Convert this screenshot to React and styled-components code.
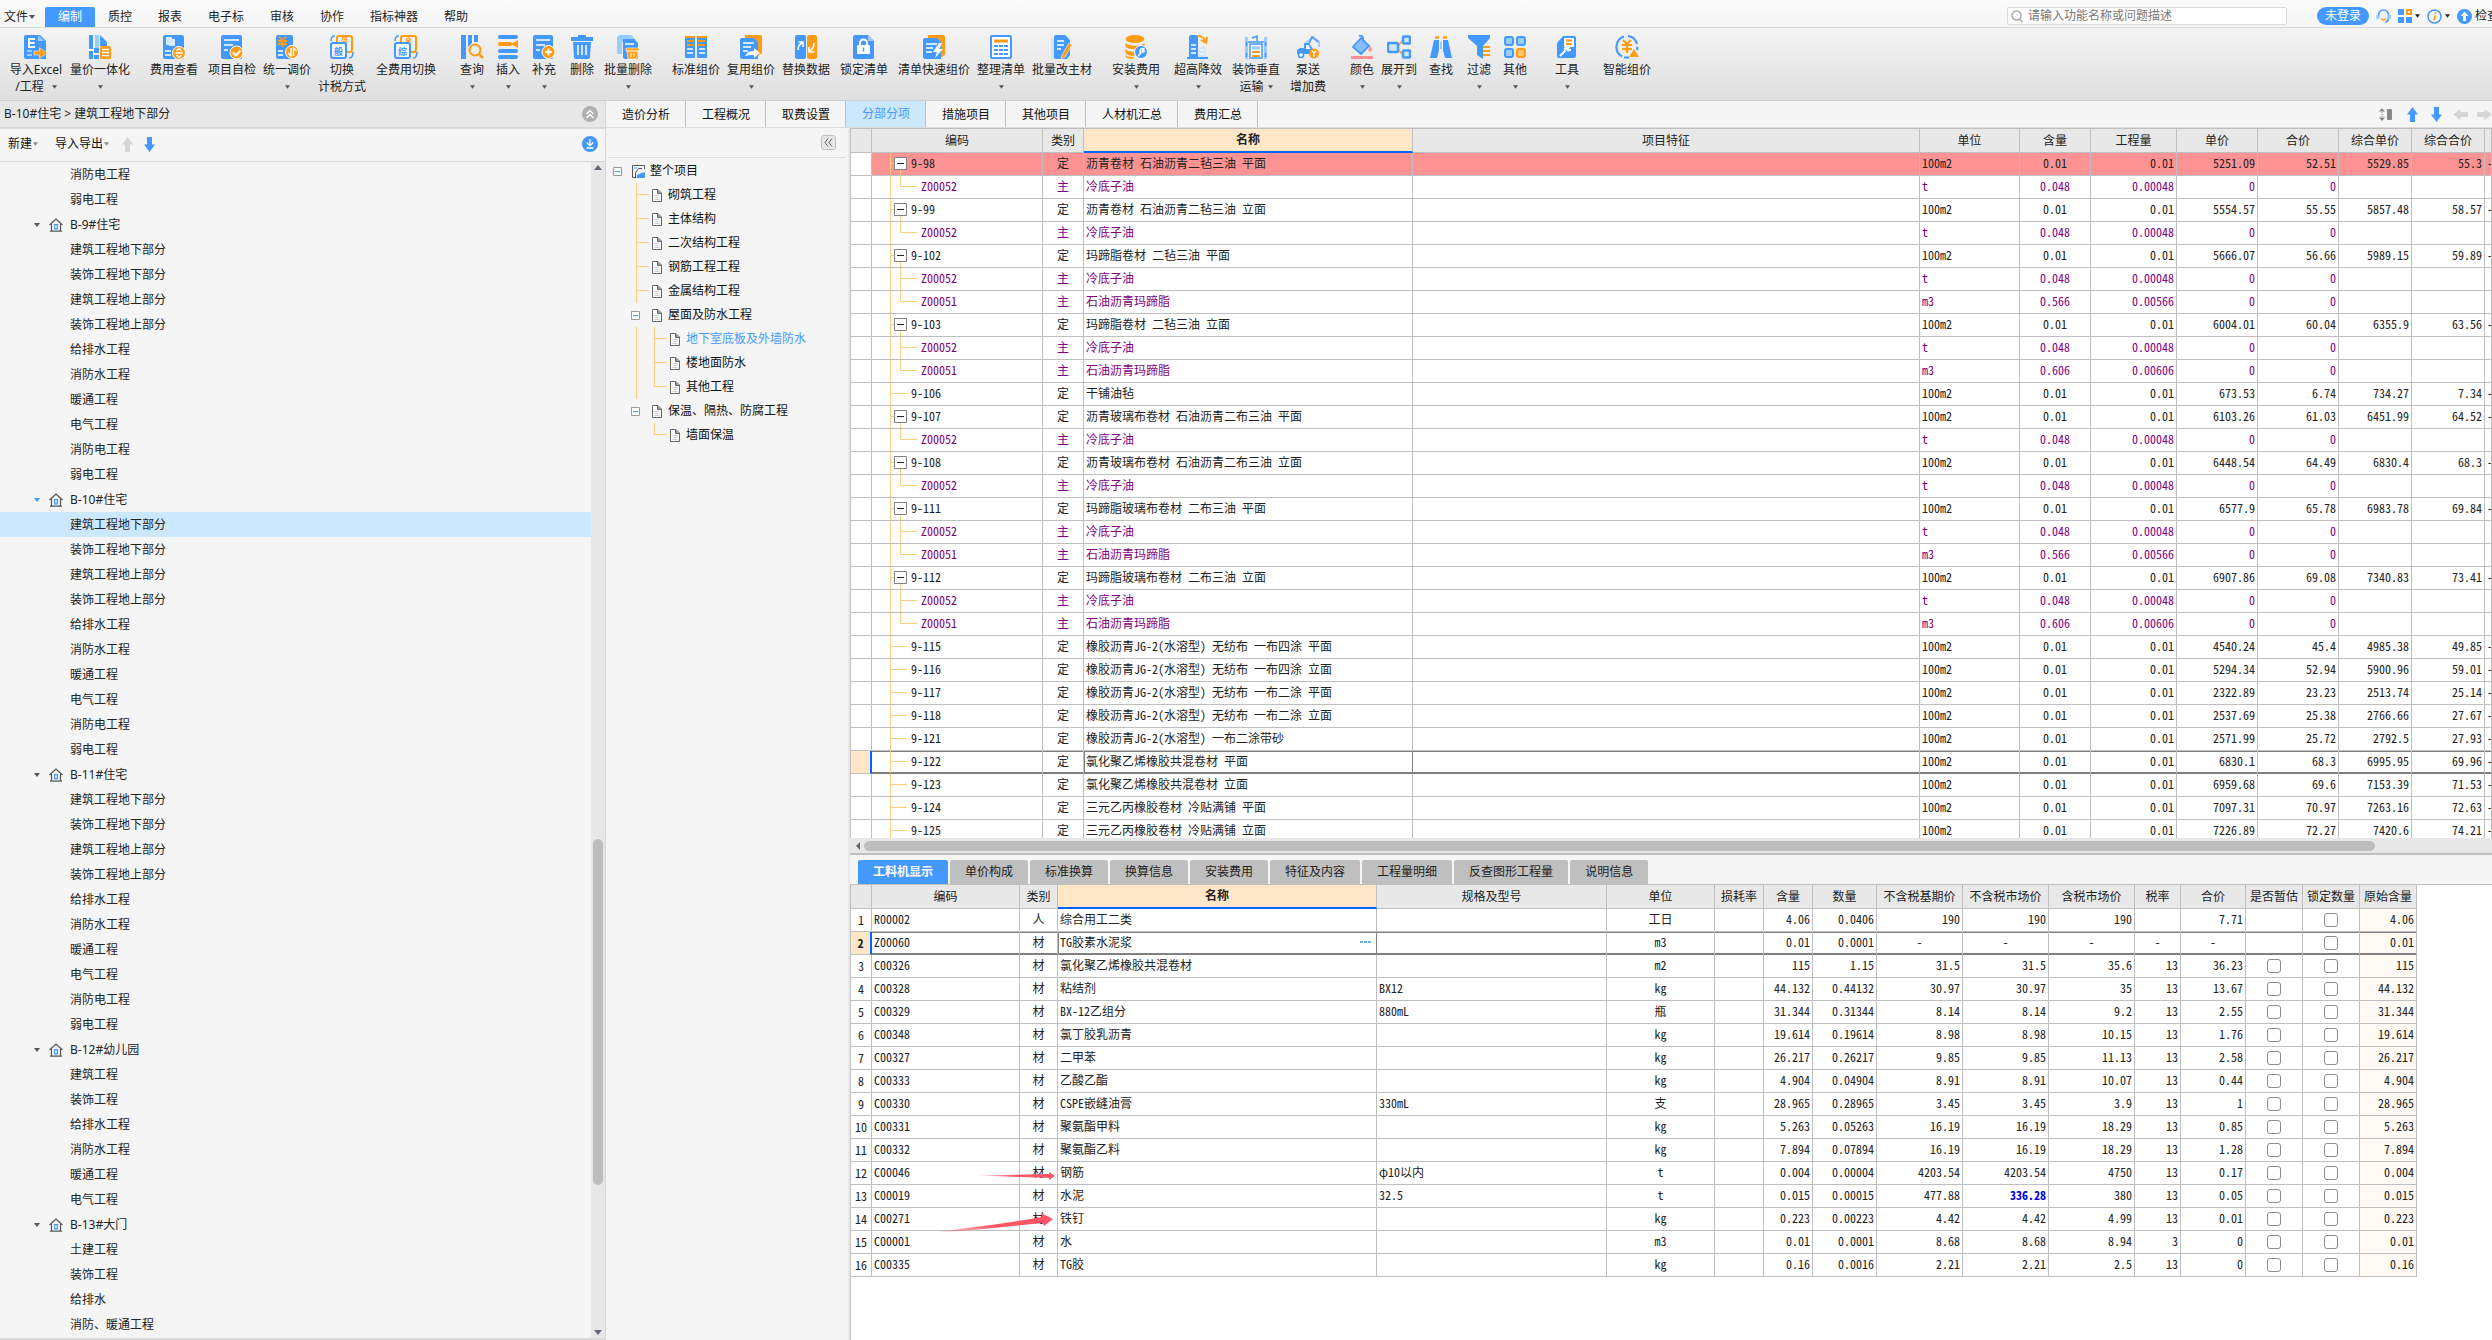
import React, { useState } from 'react';
import styled, { createGlobalStyle, css } from 'styled-components';

const BLUE = '#4499ff';
const ORANGE = '#ff9c14';
const PALE = '#99ccff';
const LINE = '#bfbfbf';
const DARK = '#808080';

const GlobalStyle = createGlobalStyle`
  * { box-sizing: border-box; }
  body {
    margin: 0;
    overflow: hidden;
    background: #f5f5f5;
    color: #222;
    font: 12px/16px "Noto Sans", "Noto Sans CJK SC", sans-serif;
  }
  button, input {
    font: inherit;
    color: inherit;
  }
  button {
    margin: 0;
    padding: 0;
    border: 0;
    background: none;
    white-space: nowrap;
  }
  svg { display: block; flex: none; }
`;

/* ---------- page ---------- */

const Page = styled.div`
  display: flex;
  flex-direction: column;
  height: 100vh;
`;

const MenuBar = styled.header`
  display: flex;
  align-items: flex-start;
  height: 28px;
  padding-top: 7px;
  border-bottom: 1px solid #d9d9d9;
  background: linear-gradient(#fbfbfb, #f5f5f5);
`;

const MenuItem = styled.button`
  display: flex;
  align-items: center;
  height: 20px;
  padding: 0 13px;
  border-radius: 2px 2px 0 0;
  ${p => p.$file && css`
    gap: 1px;
    width: 45px;
    padding: 0 0 0 4px;
  `}
  ${p => p.$on && css`
    background: ${BLUE};
    color: #fff;
  `}
`;

const MenuRight = styled.div`
  display: flex;
  align-items: center;
  gap: 7px;
  width: 485px;
  height: 18px;
  margin-left: auto;
  overflow: hidden;
`;

const SearchBox = styled.label`
  display: flex;
  flex: none;
  align-items: center;
  gap: 5px;
  width: 280px;
  height: 18px;
  margin-right: 23px;
  padding-left: 3px;
  border: 1px solid #d9d9d9;
  border-radius: 2px;
  background: #fff;
  input {
    flex: 1;
    height: 16px;
    padding: 0;
    border: 0;
    outline: 0;
    background: none;
  }
  input::placeholder { color: #777; }
`;

const LoginButton = styled.button`
  flex: none;
  width: 52px;
  height: 18px;
  border-radius: 9px;
  background: ${BLUE};
  color: #fff;
`;

const IconButton = styled.button`
  display: flex;
  flex: none;
  align-items: center;
  gap: 3px;
`;

/* ---------- ribbon ---------- */

const Ribbon = styled.nav`
  display: flex;
  align-items: flex-start;
  height: 73px;
  padding: 7px 0 0 9px;
  overflow: hidden;
  border-bottom: 1px solid #cfcfcf;
  background: linear-gradient(#f4f4f4, #dfdfdf);
`;

const RibbonItem = styled.button`
  display: flex;
  flex: none;
  flex-direction: column;
  align-items: center;
  width: ${p => p.$w}px;
  margin-left: ${p => p.$gap}px;
  line-height: 17px;
  svg + span { margin-top: 2px; }
`;

const SubLine = styled.span`
  display: flex;
  align-items: center;
  justify-content: center;
  gap: ${p => (p.$wide ? 8 : 4)}px;
  height: 17px;
`;

/* ---------- left panel ---------- */

const Main = styled.div`
  display: flex;
  flex: 1;
  min-height: 0;
`;

const ProjectPanel = styled.aside`
  display: flex;
  flex: none;
  flex-direction: column;
  width: 606px;
  border-right: 1px solid #d6d6d6;
  border-bottom: 2px solid #dadada;
`;

const PathBar = styled.div`
  display: flex;
  align-items: center;
  justify-content: space-between;
  height: 28px;
  padding: 0 7px 0 4px;
  border-bottom: 2px solid #dadada;
  background: #e7e7e7;
`;

const PanelTools = styled.div`
  display: flex;
  align-items: center;
  height: 33px;
  padding: 0 7px 2px 8px;
  border-bottom: 1px solid #d6d6d6;
`;

const ToolButton = styled.button`
  display: flex;
  align-items: center;
  gap: 1px;
  margin-right: ${p => p.$after || 0}px;
  color: #111;
`;

const Push = styled.div`
  margin-left: auto;
`;

const Scroller = styled.div`
  display: flex;
  flex: 1;
  min-height: 0;
`;

const ProjectTree = styled.ul`
  flex: 1;
  margin: 0;
  padding: 0;
  overflow: hidden;
  list-style: none;
`;

const ProjectRow = styled.li`
  display: flex;
  align-items: center;
  height: 25px;
  padding-left: ${p => (p.$house ? 33 : 70)}px;
  background: ${p => (p.$on ? '#cce8ff' : 'transparent')};
  svg + svg { margin: 0 7px 0 8px; }
`;

const VTrack = styled.div`
  display: flex;
  flex-direction: column;
  align-items: center;
  width: 14px;
  padding: 3px 0;
  background: #e7e7e7;
`;

const VThumb = styled.div`
  flex: 346;
  width: 10px;
  border-radius: 5px;
  background: #bdbdbd;
`;

const VSpace = styled.div`
  flex: ${p => p.$part};
`;

/* ---------- work area ---------- */

const Work = styled.section`
  display: flex;
  flex: 1;
  flex-direction: column;
  min-width: 0;
`;

const TabStrip = styled.nav`
  display: flex;
  height: 27px;
  border-bottom: 1px solid #dcdcdc;
`;

const PageTab = styled.button`
  padding: 2px 15px 0 16px;
  border-right: 1px solid ${LINE};
  color: #111;
  ${p => p.$on && css`
    padding-top: 0;
    background: #cce8ff;
    color: ${BLUE};
  `}
`;

const StripTools = styled.div`
  display: flex;
  align-items: center;
  gap: 9px;
  margin-left: auto;
`;

const Body = styled.div`
  display: flex;
  flex: 1;
  min-height: 0;
`;

const SectionPanel = styled.aside`
  flex: none;
  width: 244px;
  border-right: 2px solid #e9e9e9;
`;

const SectionHead = styled.div`
  display: flex;
  align-items: center;
  justify-content: flex-end;
  height: 30px;
  margin: 0 2px;
  padding-right: 10px;
  border-bottom: 1px solid #dcdcdc;
`;

const FoldButton = styled.button`
  display: flex;
  align-items: center;
  justify-content: center;
  width: 15px;
  height: 15px;
  border: 1px solid ${LINE};
  border-radius: 3px;
  background: #e7e7e7;
`;

const SectionTree = styled.ul`
  margin: 1px 0 0;
  padding: 0;
  list-style: none;
`;

const SectionRow = styled.li`
  display: flex;
  align-items: center;
  height: 24px;
  color: ${p => (p.$on ? BLUE : '#111')};
  > span { margin-left: ${p => (p.$root ? 5 : 6)}px; }
`;

const FoldBox = styled.button`
  width: 9px;
  height: 9px;
  margin: 0 ${p => (p.$root ? 10 : 12)}px 0 ${p => (p.$root ? 7 : 25)}px;
`;

/* ---------- grids ---------- */

const Grids = styled.div`
  display: flex;
  flex: 1;
  flex-direction: column;
  min-width: 0;
`;

const GridBox = styled.div`
  position: relative;
  border-top: 1px solid ${LINE};
  border-left: 1px solid ${LINE};
  background: #fff;
  overflow: hidden;
  ${p => p.$fill ? css`
    flex: 1;
    min-height: 0;
  ` : css`
    padding-bottom: 63px;
  `}
`;

const Table = styled.table`
  width: ${p => (p.$w ? p.$w + 'px' : '100%')};
  table-layout: fixed;
  border-collapse: separate;
  border-spacing: 0;
  font-family: "Noto Sans CJK SC", sans-serif;
  font-feature-settings: "hwid";
`;

const Th = styled.th`
  height: 24px;
  padding: 0 0 2px;
  border-right: 1px solid ${LINE};
  border-bottom: 1px solid ${LINE};
  background: #e8e8e8;
  font-weight: 400;
  white-space: nowrap;
  overflow: hidden;
  ${p => p.$key && css`
    border-bottom: 2px solid #0066ff;
    background: #ffe7c8;
    font-weight: 700;
  `}
`;

const Td = styled.td`
  height: 23px;
  padding: 0 ${p => (p.$align === 'center' ? 0 : 2)}px 2px;
  border-right: 1px solid ${LINE};
  border-bottom: 1px solid ${LINE};
  text-align: ${p => p.$align || 'left'};
  white-space: nowrap;
  overflow: hidden;
  ${p => p.$cream && css`background: #fffaf4;`}
  ${p => p.$edited && css`
    color: #0000dd;
    font-weight: 700;
  `}
`;

const IndexTd = styled(Td)`
  padding-bottom: 0;
  background: #fff;
  text-align: center;
`;

const BoxTd = styled(Td)`
  padding: 0;
`;

const CodeLine = styled.div`
  display: flex;
  align-items: center;
  height: 22px;
  > span { padding-bottom: 2px; }
`;

const Tr = styled.tr`
  color: ${p => (p.$main ? '#800080' : '#222')};
  background: ${p => (p.$mark ? '#ff9393' : '#fff')};
  ${p => p.$on && css`
    ${Td} {
      border-bottom-color: ${DARK};
      box-shadow: inset 0 1px 0 ${DARK}, inset 0 -1px 0 ${DARK};
    }
    ${Td}:nth-child(4) {
      border-right-color: ${DARK};
      box-shadow: inset 0 1px 0 ${DARK}, inset 0 -1px 0 ${DARK}, inset 1px 0 0 ${DARK};
    }
    ${IndexTd} {
      border-right: 2px solid #0066ff;
      border-bottom-color: ${LINE};
      background: #ffe7c8;
      box-shadow: none;
      font-weight: 700;
    }
  `}
`;

const NameLine = styled.div`
  display: flex;
  align-items: center;
  justify-content: space-between;
`;

const CheckBox = styled.input`
  display: block;
  width: 14px;
  height: 14px;
  margin: 0 auto;
  appearance: none;
  border: 1px solid #8c8c8c;
  border-radius: 3px;
  background: #fff;
`;

const HTrack = styled.div`
  display: flex;
  align-items: center;
  height: 15px;
  padding: 0 117px 0 6px;
  background: #e7e7e7;
`;

const HThumb = styled.div`
  flex: 1;
  height: 10px;
  margin-left: 4px;
  border-radius: 5px;
  background: #bdbdbd;
`;

const Detail = styled.div`
  flex: none;
  border-top: 2px solid ${LINE};
`;

const DetailTabs = styled.nav`
  display: flex;
  gap: 2px;
  padding: 5px 0 0 8px;
`;

const DetailTab = styled.button`
  height: 24px;
  padding: 0 15px;
  border-radius: 2px 2px 0 0;
  background: ${LINE};
  ${p => p.$on && css`
    background: ${BLUE};
    color: #fff;
    font-weight: 700;
  `}
`;

// hand drawn pointers that float over the rows
const Marks = styled.svg`
  position: absolute;
  top: 280px;
  left: 86px;
`;

/* ---------- small drawings ---------- */

const Caret = ({ color = '#555', w = 6 }) => (
  <svg width={w} height="4" viewBox="0 0 6 4"><path d="M0 0h6L3 4z" fill={color} /></svg>
);

const Arrow = ({ color = BLUE, turn = 0 }) => (
  <svg width="15" height="15" viewBox="0 0 15 15">
    <path d="M7.500 0l5.500 7.500h-3v7.500h-5v-7.500h-3z" fill={color} transform={`rotate(${turn} 7.500 7.500)`} />
  </svg>
);

const House = () => (
  <svg width="14" height="14" viewBox="0 0 14 14" fill="none" stroke="#555" strokeWidth="1.200">
    <path d="M.5 7L7 1l6.500 6M2.500 6v7M11.500 6v7M1 13.200h12" />
    <path d="M5.600 6.600h2.800v4.200h-2.800z" stroke={BLUE} />
  </svg>
);

const Doc = () => (
  <svg width="10" height="13" viewBox="0 0 10 13" fill="#fff" stroke="#666">
    <path d="M.5.5h5.500l3.500 3.500v8.500h-9z" />
    <path d="M5.500.5v4h4" fill="#999" />
    <path d="M2.500 6.500h5M2.500 8.500h5M2.500 10.500h5" stroke="#ccc" />
  </svg>
);

const Project = () => (
  <svg width="13" height="13" viewBox="0 0 13 13" fill="none" stroke="#556">
    <path d="M12.500 4V.5H.5v12h4M10 3.500H6.500L3.500 8v4" />
    <path d="M2 2h3v2H2z" fill={PALE} stroke="none" />
    <path d="M5 12V9.500l3-.5 1.500-1.500H13V13H5z" fill={BLUE} stroke="none" />
  </svg>
);

const MinusBox = () => (
  <svg width="9" height="9" viewBox="0 0 9 9">
    <path d="M.5.5h8v8h-8z" fill="#fff" stroke="#999" />
    <path d="M2 4.500h5" stroke="#2aa5d8" />
  </svg>
);

const CircleUp = () => (
  <svg width="16" height="16" viewBox="0 0 16 16" fill="none" stroke="#fff" strokeWidth="1.300">
    <circle cx="8" cy="8" r="8" fill="#b0b0b0" stroke="none" />
    <path d="M4.500 8L8 4.500 11.500 8M4.500 12L8 8.500l3.500 3.500" />
  </svg>
);

const CircleDown = () => (
  <svg width="16" height="16" viewBox="0 0 16 16" fill="none" stroke="#fff" strokeWidth="1.300">
    <circle cx="8" cy="8" r="8" fill={BLUE} stroke="none" />
    <path d="M8 3v6.500M4.800 6.500L8 9.700l3.200-3.200M4.500 12h7" />
  </svg>
);

// connector lines of the section tree: depth 1 or 2, outer trunk drawn when it goes on below
const Branch = ({ depth, outer, last }) => {
  const x = depth === 1 ? 30.5 : 48.5;
  return (
    <svg width={depth === 1 ? 46 : 64} height="24" fill="none" stroke="#ffcc80">
      {outer && <path d="M30.500 0v24" />}
      <path d={`M${x} 0v${last ? 12 : 24}M${x} 11.500h12`} />
    </svg>
  );
};

// connector lines in the code column
const Guide = ({ kind }) => (
  <svg width={kind === 'mid' || kind === 'last' ? 49 : 39} height="22" fill="none" stroke="#ffcc80">
    <path d="M18.500 0v22" />
    {kind === 'leaf' && <path d="M19 10.500h16" />}
    {kind === 'mid' && <path d="M28.500 0v22M29 10.500h16" />}
    {kind === 'last' && <path d="M28.500 0v10.500h16.500" />}
    {kind === 'open' && (
      <>
        <path d="M19 10.500h3M28.500 17v5" />
        <path d="M22.500 4.500h12v12h-12z" fill="#fff" stroke={DARK} />
        <path d="M25 10.500h7" stroke="#222" />
      </>
    )}
  </svg>
);

const Sheet = ({ w = 19 }) => <path d={`M2 0h${w - 7}l6 6v18H2a2 2 0 0 1-2-2V2a2 2 0 0 1 2-2z`} fill={BLUE} />;
const Glyph = ({ x, y, size, fill, children }) => (
  <text x={x} y={y} fontSize={size} fill={fill} fontWeight="700" textAnchor="middle" fontFamily="Noto Sans CJK SC, sans-serif">{children}</text>
);

// two overlapping tiles with a character each
const Tiles = ({ back, front }) => (
  <>
    <rect x="7" y="1" width="15" height="16" rx="2" fill="none" stroke={ORANGE} strokeWidth="2" />
    <Glyph x="14.500" y="7.500" size={7} fill={ORANGE}>{back}</Glyph>
    <rect x="1" y="8" width="15" height="15" rx="2" fill="#f2f7fc" stroke={BLUE} strokeWidth="2" />
    <Glyph x="8.500" y="20" size={9} fill={BLUE}>{front}</Glyph>
    <path d="M1 6c0-3 1-5 4-5M23 17c0 4-1 6-4 6" stroke={BLUE} strokeWidth="1.500" fill="none" />
  </>
);

const icons = {
  excel: <>
    <Sheet w={21} />
    <path d="M20 6h-6V0z" fill={PALE} />
    <path d="M4 3h7v2H6v2h4.500v2H6v2h5v2H4z" fill="#fff" />
    <path d="M3 16h5M3 20h5" stroke={PALE} strokeWidth="2" />
    <path d="M10 16h5.500v-3.500L23 18l-7.500 5.500V20H10z" fill={ORANGE} stroke="#eee" strokeWidth=".6" />
  </>,
  unify: <>
    <path d="M1 0h4v14H1zM1 16h4v8H1zM12 0l7 7v4h-7z" fill={BLUE} />
    <path d="M7 0h4v13H7z" fill={PALE} />
    <path d="M6 13h5v5H6zM6 20h5v4H6z" fill={BLUE} />
    <path d="M0 14.500h5M5.500 14v6" stroke="#fff" />
    <rect x="12" y="11" width="11" height="13" rx="2" fill={ORANGE} />
    <path d="M14 14.500h7M14 17.500h7M14 20.500h7" stroke="#fff" strokeWidth="1.500" />
  </>,
  fee: <>
    <rect x="1" width="21" height="24" rx="2" fill={BLUE} />
    <path d="M4 2h6v8H4zM7 4h6v7H7z" fill="#d9ecff" />
    <path d="M3 16h6M3 20h6" stroke="#fff" strokeWidth="1.500" />
    <circle cx="17" cy="18" r="6.500" fill={ORANGE} stroke="#fff" />
    <path d="M13 18h8M14.500 16L17 13.500l2.500 2.500M14.500 20l2.500 2.500 2.500-2.500" stroke="#fff" fill="none" strokeWidth="1.300" />
  </>,
  check: <>
    <rect x="1" width="21" height="24" rx="2" fill={BLUE} />
    <path d="M4 5h15M4 10h9M4 15h4" stroke="#fff" strokeWidth="1.500" />
    <circle cx="16.500" cy="17.500" r="6.500" fill={ORANGE} stroke="#fff" />
    <path d="M13 17.500l3 3 4.500-5" stroke="#fff" fill="none" strokeWidth="2" />
  </>,
  price: <>
    <rect x="1" width="17" height="24" rx="2" fill={BLUE} />
    <path d="M4 1.500l3.500 4 3.500-4M3 6h9M3 9h9M7.500 5.500V12" stroke={ORANGE} strokeWidth="1.800" fill="none" />
    <path d="M3 16h5M3 20h5" stroke="#fff" strokeWidth="1.500" />
    <circle cx="17" cy="17" r="6.500" fill={ORANGE} stroke="#fff" />
    <path d="M16 13v8l-3-3M18.500 21v-8l3 3" stroke="#fff" fill="none" strokeWidth="1.500" />
  </>,
  swap: <Tiles back="简" front="般" />,
  full: <Tiles back="全" front="综" />,
  find: <>
    <path d="M1 0h5v24H1zM8 0h4v8l-4 4zM14 0h4v7h-4z" fill={BLUE} />
    <circle cx="15" cy="15" r="5.500" fill="none" stroke={ORANGE} strokeWidth="2" />
    <path d="M19 19l4 4" stroke={ORANGE} strokeWidth="2.500" />
  </>,
  insert: <>
    <path d="M4 2h16M4 16h16M4 22h16" stroke={BLUE} strokeWidth="4" strokeLinecap="round" />
    <path d="M4 9h10" stroke={ORANGE} strokeWidth="4" strokeLinecap="round" />
    <path d="M15 9l7-4v8z" fill={ORANGE} />
  </>,
  add: <>
    <rect x="1" width="20" height="24" rx="2" fill={BLUE} />
    <path d="M4 5h14M4 10h9M4 15h4" stroke="#fff" strokeWidth="1.500" />
    <circle cx="16.500" cy="17" r="6.500" fill={ORANGE} stroke="#fff" />
    <path d="M16.500 13.500v7M13 17h7" stroke="#fff" strokeWidth="1.800" />
  </>,
  trash: <>
    <path d="M8 0h8v2h7v4H1V2h7zM3 7h18l-1 15a2 2 0 0 1-2 2H6a2 2 0 0 1-2-2z" fill={BLUE} />
    <path d="M8 10v10M12 10v10M16 10v10" stroke="#fff" strokeWidth="1.500" />
  </>,
  trashes: <>
    <path d="M3 0h12l4 4v3H6v12H1V2z" fill={PALE} />
    <path d="M7 4h11l4 4v16H9a2 2 0 0 1-2-2z" fill={BLUE} />
    <path d="M9 9h9" stroke="#fff" strokeWidth="1.500" />
    <path d="M10 13h13v3H10zM11 16h11l-1 8h-9z" fill={ORANGE} stroke="#fff" strokeWidth=".6" />
    <path d="M15 18v4M18 18v4" stroke="#fff" />
  </>,
  standard: <>
    <rect x="1" y="1" width="10" height="22" rx="1" fill={BLUE} />
    <rect x="13" y="1" width="10" height="22" rx="1" fill={BLUE} />
    <path d="M1 2h10M13 2h10M3 6h7M14 6h7M3 10h7M14 10h7" stroke={ORANGE} strokeWidth="2" />
    <path d="M3 14h6M15 14h6M3 18h6M15 18h6" stroke="#fff" strokeWidth="1.500" />
  </>,
  reuse: <>
    <path d="M6 0h15a2 2 0 0 1 2 2v16l-4 3H6z" fill={ORANGE} />
    <path d="M3 3h12l4 4v17H3a2 2 0 0 1-2-2V5a2 2 0 0 1 2-2z" fill={BLUE} />
    <path d="M4 8h11M4 12h8M4 16h5" stroke="#fff" strokeWidth="1.500" />
    <path d="M6 21c2-4 5-5 9-5v-3l6 5-6 5v-3c-4 0-6 0-9 1z" fill="#fff" />
  </>,
  replace: <>
    <rect x="1" width="11" height="24" rx="2" fill={BLUE} />
    <rect x="13" width="10" height="24" rx="2" fill={ORANGE} />
    <path d="M4 15c0-4 2-6 4-7M4.500 7H9v5M20 8c0 4-1 6-4 8M20.500 17H15v-5" stroke="#fff" strokeWidth="1.600" fill="none" />
  </>,
  lock: <>
    <path d="M3 0h13l6 6v16a2 2 0 0 1-2 2H3a2 2 0 0 1-2-2V2a2 2 0 0 1 2-2z" fill={BLUE} />
    <path d="M16 0v6h6z" fill={PALE} />
    <rect x="5" y="10" width="13" height="9" rx="1" fill="#fff" />
    <path d="M8 10V8a3.500 3.500 0 0 1 7 0v2" fill="none" stroke="#fff" strokeWidth="2" />
    <path d="M11.500 12.500v4" stroke={BLUE} strokeWidth="1.600" />
  </>,
  quick: <>
    <path d="M6 0h15a2 2 0 0 1 2 2v18l-3 2H6z" fill={ORANGE} />
    <path d="M3 3h12l4 4v17H3a2 2 0 0 1-2-2V5a2 2 0 0 1 2-2z" fill={BLUE} />
    <path d="M4 9h11M4 13h7M4 17h6" stroke="#fff" strokeWidth="1.500" />
    <path d="M17 8l-6 9h4l-2 6 8-9h-4l3-6z" fill="#fff" />
  </>,
  tidy: <>
    <rect x="2" y="1" width="20" height="22" rx="1" fill="#fff" stroke={BLUE} strokeWidth="2" />
    <path d="M5 6h14" stroke={ORANGE} strokeWidth="3" />
    <path d="M5 11h4M10 11h4M15 11h4M5 15h4M10 15h4M15 15h4M5 19h4M10 19h4M15 19h4" stroke={BLUE} strokeWidth="1.800" />
  </>,
  batch: <>
    <path d="M1 4h8v20H3a2 2 0 0 1-2-2z" fill="#cfe6ff" />
    <path d="M6 0h9l5 5v15l-3 4H6a2 2 0 0 1-2-2V2a2 2 0 0 1 2-2z" fill={BLUE} />
    <path d="M7 6h7M7 10h7M7 14h4" stroke="#fff" strokeWidth="1.500" />
    <path d="M19 8l3 2-7 12-4 2 1-4z" fill={ORANGE} stroke="#eee" strokeWidth=".6" />
  </>,
  coins: <>
    <ellipse cx="11" cy="4" rx="9.500" ry="4" fill={ORANGE} />
    <path d="M1.500 8c3 3.500 16 3.500 19 0v4c-3 3-16 3-19 0zM1.500 14c2 2 5 3 9 3v4c-4 0-8-1-9-3zM1.500 20c2 2 5 2 8 2v2c-4 0-7-1-8-2z" fill={ORANGE} />
    <circle cx="17" cy="17" r="6.500" fill={BLUE} stroke="#fff" />
    <path d="M14 21l3-3a2.500 2.500 0 0 1 3-4l-2 2 1 1 2-1" stroke="#fff" strokeWidth="1.500" fill="none" />
  </>,
  high: <>
    <path d="M3 2a2 2 0 0 1 2-2h5a2 2 0 0 1 2 2v20H3zM1 22h21v2H1z" fill={BLUE} />
    <path d="M5 10h5M5 14h5M5 18h5" stroke="#fff" strokeWidth="1.500" />
    <path d="M13 12h7v10h-7z" fill="#cfe6ff" />
    <path d="M14 15h5M14 19h5" stroke="#fff" />
    <path d="M12 1c4 0 6 2 7 5M15 5l5 3 1-6" stroke={ORANGE} strokeWidth="2" fill="none" />
  </>,
  hoist: <>
    <path d="M2.500 2v22M21.500 2v22" stroke={PALE} strokeWidth="3" />
    <path d="M2.500 7v4M21.500 7v4M2.500 18v4M21.500 18v4M4 7h16M8 3l5-2v5" stroke={BLUE} strokeWidth="1.500" fill="none" />
    <path d="M6 9h12v14H6z" fill="#f4f8fc" stroke={BLUE} strokeWidth="1.500" />
    <path d="M8 17h8M8 21h8" stroke={ORANGE} strokeWidth="2" />
    <path d="M8 13h8" stroke={PALE} strokeWidth="3" />
  </>,
  pump: <>
    <path d="M10 8l7-6 6 5v5" fill="none" stroke={PALE} strokeWidth="2" />
    <path d="M12 11l4-9 6 5" fill="none" stroke={BLUE} strokeWidth="1.500" />
    <path d="M8 8h5l4 6v5H1v-4l3-2h4z" fill={BLUE} />
    <path d="M10 10h2.500l2 4H10z" fill="#fff" />
    <circle cx="5" cy="20" r="2.500" fill="#fff" stroke={BLUE} strokeWidth="1.500" />
    <circle cx="18" cy="18.500" r="5" fill={ORANGE} />
    <path d="M16 16l2 2 2-2M18 18v4" stroke="#fff" strokeWidth="1.300" fill="none" />
  </>,
  color: <>
    <path d="M9 1c2-1 4 0 4 3v5" fill="none" stroke={BLUE} strokeWidth="2" />
    <path d="M11 3l8 8-8 8-8-7z" fill="#86bfff" stroke={BLUE} strokeWidth="1.800" />
    <path d="M20 10c1.500 3 3 4 1.500 6s-4 0-3-2z" fill="#ff9393" />
    <path d="M1 22.500h22" stroke="#ff9393" strokeWidth="3" />
  </>,
  expand: <>
    <rect x="1" y="8" width="10" height="9" rx="1" fill="#cfe6ff" stroke={BLUE} strokeWidth="2.500" />
    <rect x="16" y="1.500" width="7" height="7" rx="1" fill="#cfe6ff" stroke={BLUE} strokeWidth="2.500" />
    <rect x="16" y="15.500" width="7" height="7" rx="1" fill="#cfe6ff" stroke={BLUE} strokeWidth="2.500" />
    <path d="M12 10l3-4M12 15l3 4" stroke={ORANGE} strokeWidth="1.500" />
  </>,
  look: <>
    <path d="M5 5h5v10l-2 8H1zM14 5h5l4 18h-7l-2-8z" fill={BLUE} />
    <path d="M6 2.500h4M14 2.500h4" stroke={ORANGE} strokeWidth="2.500" />
    <path d="M11 7h2v7h-2z" fill={PALE} />
  </>,
  filter: <>
    <path d="M1 0h22v3l-7 8v13l-6-4v-9L1 3z" fill={BLUE} />
    <path d="M16 12h7M16 16h7M16 20h7" stroke={ORANGE} strokeWidth="2" />
  </>,
  other: <>
    <rect x="2" y="2" width="8" height="8" rx="2" fill={PALE} stroke={BLUE} strokeWidth="2" />
    <rect x="14" y="2" width="8" height="8" rx="2" fill={PALE} stroke={BLUE} strokeWidth="2" />
    <rect x="2" y="14" width="8" height="8" rx="2" fill={PALE} stroke={BLUE} strokeWidth="2" />
    <rect x="14" y="14" width="8" height="8" rx="2" fill="#ffc46b" stroke={ORANGE} strokeWidth="2" />
  </>,
  tools: <>
    <path d="M8 1h11a2 2 0 0 1 2 2v18a2 2 0 0 1-2 2H4a2 2 0 0 1-2-2V8z" fill={BLUE} />
    <path d="M9 3h10v9H9z" fill="#fff" />
    <path d="M11 5.500h6M11 9h6" stroke={ORANGE} strokeWidth="1.800" />
    <path d="M5 21l5-5a3 3 0 0 1 4-4l-2 2 1 1.500 3-1" fill="none" stroke="#fff" strokeWidth="2" />
  </>,
  smart: <>
    <path d="M9 1.500a11 11 0 0 0-2 20M13 1a11 11 0 0 1 9 8M22.500 12l-.5 3M9 22.500h5" fill="none" stroke={BLUE} strokeWidth="2.200" />
    <path d="M8 5l4 4 4-4M7 10h10M7 14h10M12 9v9" fill="none" stroke={ORANGE} strokeWidth="2.200" />
    <path d="M19 14l5 8H14z" fill={ORANGE} />
  </>,
};

const Icon = ({ name }) => <svg width="24" height="24" viewBox="0 0 24 24">{icons[name]}</svg>;

/* ---------- data ---------- */

// [icon, label, width, gap before, second line, has caret]
const ribbon = [
  ['excel', '导入Excel', 54, 0, '/工程', true],
  ['unify', '量价一体化', 60, 7, '', true],
  ['fee', '费用查看', 48, 20],
  ['check', '项目自检', 48, 10],
  ['price', '统一调价', 48, 7, '', true],
  ['swap', '切换', 48, 7, '计税方式'],
  ['full', '全费用切换', 60, 10],
  ['find', '查询', 24, 24, '', true],
  ['insert', '插入', 24, 12, '', true],
  ['add', '补充', 24, 12, '', true],
  ['trash', '删除', 24, 14],
  ['trashes', '批量删除', 48, 10, '', true],
  ['standard', '标准组价', 48, 20],
  ['reuse', '复用组价', 48, 7, '', true],
  ['replace', '替换数据', 48, 7],
  ['lock', '锁定清单', 48, 10],
  ['quick', '清单快速组价', 72, 10],
  ['tidy', '整理清单', 48, 7, '', true],
  ['batch', '批量改主材', 60, 7],
  ['coins', '安装费用', 48, 20, '', true],
  ['high', '超高降效', 48, 14, '', true],
  ['hoist', '装饰垂直', 48, 10, '运输', true],
  ['pump', '泵送', 36, 10, '增加费'],
  ['color', '颜色', 24, 24, '', true],
  ['expand', '展开到', 36, 7, '', true],
  ['look', '查找', 24, 12],
  ['filter', '过滤', 24, 14, '', true],
  ['other', '其他', 24, 12, '', true],
  ['tools', '工具', 24, 28, '', true],
  ['smart', '智能组价', 48, 24],
];

const menus = ['编制', '质控', '报表', '电子标', '审核', '协作', '指标神器', '帮助'];

const tower = ['建筑工程地下部分', '装饰工程地下部分', '建筑工程地上部分', '装饰工程地上部分', '给排水工程', '消防水工程', '暖通工程', '电气工程', '消防电工程', '弱电工程'];
const projects = [
  { items: ['消防电工程', '弱电工程'] },
  { name: 'B-9#住宅', items: tower },
  { name: 'B-10#住宅', items: tower, open: true },
  { name: 'B-11#住宅', items: tower },
  { name: 'B-12#幼儿园', items: ['建筑工程', '装饰工程', '给排水工程', '消防水工程', '暖通工程', '电气工程'] },
  { name: 'B-13#大门', items: ['土建工程', '装饰工程', '给排水', '消防、暖通工程'] },
];

const pageTabs = ['造价分析', '工程概况', '取费设置', '分部分项', '措施项目', '其他项目', '人材机汇总', '费用汇总'];

const sections = [
  { name: '砌筑工程', depth: 1 },
  { name: '主体结构', depth: 1 },
  { name: '二次结构工程', depth: 1 },
  { name: '钢筋工程工程', depth: 1 },
  { name: '金属结构工程', depth: 1 },
  { name: '屋面及防水工程', fold: true },
  { name: '地下室底板及外墙防水', depth: 2, outer: true },
  { name: '楼地面防水', depth: 2, outer: true },
  { name: '其他工程', depth: 2, outer: true, last: true },
  { name: '保温、隔热、防腐工程', fold: true },
  { name: '墙面保温', depth: 2, last: true },
];

const topCols = [21, 171, 41, 329, null, 100, 71, 86, 81, 81, 73, 73, 7];
const topHeads = ['', '编码', '类别', '名称', '项目特征', '单位', '含量', '工程量', '单价', '合价', '综合单价', '综合合价', ''];

const primer = ['Z00052', '冷底子油', 't', '0.048', '0.00048', '0', '0', '', ''];
const mastic = (qty, amount) => ['Z00051', '石油沥青玛蹄脂', 'm3', qty, amount, '0', '0', '', ''];
const quota = (code, name, ...prices) => [code, name, '100m2', '0.01', '0.01', ...prices];

const topRows = [
  quota('9-98', '沥青卷材 石油沥青二毡三油 平面', '5251.09', '52.51', '5529.85', '55.3'),
  primer,
  quota('9-99', '沥青卷材 石油沥青二毡三油 立面', '5554.57', '55.55', '5857.48', '58.57'),
  primer,
  quota('9-102', '玛蹄脂卷材 二毡三油 平面', '5666.07', '56.66', '5989.15', '59.89'),
  primer,
  mastic('0.566', '0.00566'),
  quota('9-103', '玛蹄脂卷材 二毡三油 立面', '6004.01', '60.04', '6355.9', '63.56'),
  primer,
  mastic('0.606', '0.00606'),
  quota('9-106', '干铺油毡', '673.53', '6.74', '734.27', '7.34'),
  quota('9-107', '沥青玻璃布卷材 石油沥青二布三油 平面', '6103.26', '61.03', '6451.99', '64.52'),
  primer,
  quota('9-108', '沥青玻璃布卷材 石油沥青二布三油 立面', '6448.54', '64.49', '6830.4', '68.3'),
  primer,
  quota('9-111', '玛蹄脂玻璃布卷材 二布三油 平面', '6577.9', '65.78', '6983.78', '69.84'),
  primer,
  mastic('0.566', '0.00566'),
  quota('9-112', '玛蹄脂玻璃布卷材 二布三油 立面', '6907.86', '69.08', '7340.83', '73.41'),
  primer,
  mastic('0.606', '0.00606'),
  quota('9-115', '橡胶沥青JG-2(水溶型) 无纺布 一布四涂 平面', '4540.24', '45.4', '4985.38', '49.85'),
  quota('9-116', '橡胶沥青JG-2(水溶型) 无纺布 一布四涂 立面', '5294.34', '52.94', '5900.96', '59.01'),
  quota('9-117', '橡胶沥青JG-2(水溶型) 无纺布 一布二涂 平面', '2322.89', '23.23', '2513.74', '25.14'),
  quota('9-118', '橡胶沥青JG-2(水溶型) 无纺布 一布二涂 立面', '2537.69', '25.38', '2766.66', '27.67'),
  quota('9-121', '橡胶沥青JG-2(水溶型) 一布二涂带砂', '2571.99', '25.72', '2792.5', '27.93'),
  quota('9-122', '氯化聚乙烯橡胶共混卷材 平面', '6830.1', '68.3', '6995.95', '69.96'),
  quota('9-123', '氯化聚乙烯橡胶共混卷材 立面', '6959.68', '69.6', '7153.39', '71.53'),
  quota('9-124', '三元乙丙橡胶卷材 冷贴满铺 平面', '7097.31', '70.97', '7263.16', '72.63'),
  quota('9-125', '三元乙丙橡胶卷材 冷贴满铺 立面', '7226.89', '72.27', '7420.6', '74.21'),
];

const detailTabs = ['工料机显示', '单价构成', '标准换算', '换算信息', '安装费用', '特征及内容', '工程量明细', '反查图形工程量', '说明信息'];

const lowCols = [21, 148, 38, 319, 230, 108, 49, 49, 64, 86, 86, 86, 46, 65, 57, 57, 57];
const lowHeads = ['', '编码', '类别', '名称', '规格及型号', '单位', '损耗率', '含量', '数量', '不含税基期价', '不含税市场价', '含税市场价', '税率', '合价', '是否暂估', '锁定数量', '原始含量'];

// code, name, spec, unit, content, quantity, base price, market price, taxed price, tax, total
const lowRows = [
  ['R00002', '综合用工二类', '', '工日', '4.06', '0.0406', '190', '190', '190', '', '7.71'],
  ['Z00060', 'TG胶素水泥浆', '', 'm3', '0.01', '0.0001', '-', '-', '-', '-', '-'],
  ['C00326', '氯化聚乙烯橡胶共混卷材', '', 'm2', '115', '1.15', '31.5', '31.5', '35.6', '13', '36.23'],
  ['C00328', '粘结剂', 'BX12', 'kg', '44.132', '0.44132', '30.97', '30.97', '35', '13', '13.67'],
  ['C00329', 'BX-12乙组分', '880mL', '瓶', '31.344', '0.31344', '8.14', '8.14', '9.2', '13', '2.55'],
  ['C00348', '氯丁胶乳沥青', '', 'kg', '19.614', '0.19614', '8.98', '8.98', '10.15', '13', '1.76'],
  ['C00327', '二甲苯', '', 'kg', '26.217', '0.26217', '9.85', '9.85', '11.13', '13', '2.58'],
  ['C00333', '乙酸乙酯', '', 'kg', '4.904', '0.04904', '8.91', '8.91', '10.07', '13', '0.44'],
  ['C00330', 'CSPE嵌缝油膏', '330mL', '支', '28.965', '0.28965', '3.45', '3.45', '3.9', '13', '1'],
  ['C00331', '聚氨酯甲料', '', 'kg', '5.263', '0.05263', '16.19', '16.19', '18.29', '13', '0.85'],
  ['C00332', '聚氨酯乙料', '', 'kg', '7.894', '0.07894', '16.19', '16.19', '18.29', '13', '1.28'],
  ['C00046', '钢筋', 'φ10以内', 't', '0.004', '0.00004', '4203.54', '4203.54', '4750', '13', '0.17'],
  ['C00019', '水泥', '32.5', 't', '0.015', '0.00015', '477.88', '336.28', '380', '13', '0.05'],
  ['C00271', '铁钉', '', 'kg', '0.223', '0.00223', '4.42', '4.42', '4.99', '13', '0.01'],
  ['C00001', '水', '', 'm3', '0.01', '0.0001', '8.68', '8.68', '8.94', '3', '0'],
  ['C00335', 'TG胶', '', 'kg', '0.16', '0.0016', '2.21', '2.21', '2.5', '13', '0'],
];

const isMain = row => !!row && row[0].startsWith('Z');

function guideKind(i) {
  const next = isMain(topRows[i + 1]);
  if (isMain(topRows[i])) return next ? 'mid' : 'last';
  return next ? 'open' : 'leaf';
}

/* ---------- parts ---------- */

function TopBar() {
  const [on, setOn] = useState('编制');
  return (
    <MenuBar>
      <MenuItem $file>文件<Caret /></MenuItem>
      {menus.map(m => <MenuItem key={m} $on={m === on} onClick={() => setOn(m)}>{m}</MenuItem>)}
      <MenuRight>
        <SearchBox>
          <svg width="12" height="13" viewBox="0 0 12 13" fill="none" stroke="#aaa" strokeWidth="1.500">
            <circle cx="5.500" cy="5.500" r="4.500" /><path d="M8.500 9l3 3.500" />
          </svg>
          <input aria-label="搜索" placeholder="请输入功能名称或问题描述" />
        </SearchBox>
        <LoginButton>未登录</LoginButton>
        <IconButton aria-label="客服">
          <svg width="15" height="15" viewBox="0 0 15 15" fill="none" strokeWidth="1.600">
            <path d="M2.500 9V6a5 5 0 0 1 10 0v3a5 5 0 0 1-3 4.500" stroke={BLUE} />
            <path d="M1.500 6v4M13.500 6v4" stroke={PALE} strokeWidth="2.500" />
            <path d="M5 9.500c1.500 2 3.500 2 5 0" stroke={ORANGE} />
          </svg>
        </IconButton>
        <IconButton aria-label="应用">
          <svg width="14" height="14" viewBox="0 0 14 14">
            <path d="M0 0h6v6H0zM0 8h6v6H0zM8 8h6v6H8z" fill={BLUE} />
            <path d="M9 1h4v4H9z" fill="none" stroke={ORANGE} strokeWidth="2" />
          </svg>
          <Caret color="#222" w={5} />
        </IconButton>
        <IconButton aria-label="信息">
          <svg width="15" height="15" viewBox="0 0 15 15" fill="none">
            <circle cx="7.500" cy="7.500" r="6.500" stroke={BLUE} strokeWidth="1.500" />
            <path d="M8.500 3v1.800M8 6.300L7 11.500" stroke={ORANGE} strokeWidth="1.600" />
          </svg>
          <Caret color="#222" w={5} />
        </IconButton>
        <IconButton>
          <svg width="15" height="15" viewBox="0 0 15 15">
            <circle cx="7.500" cy="7.500" r="7.500" fill={BLUE} />
            <path d="M7.500 2.500l4 4.500h-2.500v5h-3V7h-2.500z" fill="#fff" />
          </svg>
          检查
        </IconButton>
      </MenuRight>
    </MenuBar>
  );
}

function Projects() {
  return (
    <ProjectPanel>
      <PathBar>
        <span>B-10#住宅 &gt; 建筑工程地下部分</span>
        <IconButton aria-label="收起"><CircleUp /></IconButton>
      </PathBar>
      <PanelTools>
        <ToolButton $after={17}>新建<Caret color="#888" w={5} /></ToolButton>
        <ToolButton $after={11}>导入导出<Caret color="#888" w={5} /></ToolButton>
        <ToolButton aria-label="上移" $after={7}><Arrow color="#d5d5d5" /></ToolButton>
        <ToolButton aria-label="下移"><Arrow turn={180} /></ToolButton>
        <Push><IconButton aria-label="展开"><CircleDown /></IconButton></Push>
      </PanelTools>
      <Scroller>
        <ProjectTree>
          {projects.map((p, n) => (
            <React.Fragment key={n}>
              {p.name && (
                <ProjectRow $house>
                  <Caret color={p.open ? BLUE : '#555'} w={8} />
                  <House />
                  {p.name}
                </ProjectRow>
              )}
              {p.items.map((t, i) => <ProjectRow key={t} $on={p.open && i === 0}>{t}</ProjectRow>)}
            </React.Fragment>
          ))}
        </ProjectTree>
        <VTrack>
          <svg width="8" height="5"><path d="M0 5h8L4 0z" fill="#667" /></svg>
          <VSpace $part={668} />
          <VThumb />
          <VSpace $part={145} />
          <svg width="8" height="5"><path d="M0 0h8L4 5z" fill="#667" /></svg>
        </VTrack>
      </Scroller>
    </ProjectPanel>
  );
}

function Sections() {
  return (
    <SectionPanel>
      <SectionHead>
        <FoldButton aria-label="折叠">
          <svg width="9" height="9" viewBox="0 0 9 9" fill="none" stroke="#666"><path d="M4 .5l-3 4 3 4M8 .5l-3 4 3 4" /></svg>
        </FoldButton>
      </SectionHead>
      <SectionTree>
        <SectionRow $root>
          <FoldBox $root aria-label="折叠"><MinusBox /></FoldBox>
          <Project />
          <span>整个项目</span>
        </SectionRow>
        {sections.map((s, i) => (
          <SectionRow key={s.name} $on={i === 6}>
            {s.fold
              ? <FoldBox aria-label="折叠"><MinusBox /></FoldBox>
              : <Branch depth={s.depth} outer={s.outer} last={s.last} />}
            <Doc />
            <span>{s.name}</span>
          </SectionRow>
        ))}
      </SectionTree>
    </SectionPanel>
  );
}

function Cols({ list }) {
  return <colgroup>{list.map((w, i) => <col key={i} width={w || undefined} />)}</colgroup>;
}

function Heads({ list }) {
  return <thead><tr>{list.map((h, i) => <Th key={i} $key={h === '名称'}>{h}</Th>)}</tr></thead>;
}

function QuotaGrid() {
  return (
    <GridBox $fill>
      <Table>
        <Cols list={topCols} />
        <Heads list={topHeads} />
        <tbody>
          {topRows.map((r, i) => (
            <Tr key={i} $main={isMain(r)} $mark={i === 0} $on={r[0] === '9-122'}>
              <IndexTd />
              <BoxTd><CodeLine><Guide kind={guideKind(i)} /><span>{r[0]}</span></CodeLine></BoxTd>
              <Td $align="center">{isMain(r) ? '主' : '定'}</Td>
              <Td>{r[1]}</Td>
              <Td />
              <Td>{r[2]}</Td>
              <Td $align="center">{r[3]}</Td>
              {r.slice(4).map((v, n) => <Td key={n} $align="right">{v}</Td>)}
              <Td>{isMain(r) ? '' : '-'}</Td>
            </Tr>
          ))}
        </tbody>
      </Table>
    </GridBox>
  );
}

function MaterialGrid() {
  return (
    <GridBox>
      <Table $w={lowCols.reduce((a, b) => a + b)}>
        <Cols list={lowCols} />
        <Heads list={lowHeads} />
        <tbody>
          {lowRows.map((r, i) => (
            <Tr key={r[0]} $on={i === 1}>
              <IndexTd>{i + 1}</IndexTd>
              <Td>{r[0]}</Td>
              <Td $align="center">{i === 0 ? '人' : '材'}</Td>
              <Td>
                <NameLine>
                  {r[1]}
                  {i === 1 && <svg width="14" height="2"><path d="M0 0h3v2H0zM4 0h3v2H4zM8 0h3v2H8z" fill="#6aaee6" /></svg>}
                </NameLine>
              </Td>
              <Td>{r[2]}</Td>
              <Td $align="center">{r[3]}</Td>
              <Td />
              {r.slice(4).map((v, n) => (
                <Td key={n} $align={v === '-' ? 'center' : 'right'} $edited={v === '336.28'}>{v}</Td>
              ))}
              <BoxTd>{i > 1 && <CheckBox type="checkbox" aria-label="是否暂估" />}</BoxTd>
              <BoxTd><CheckBox type="checkbox" aria-label="锁定数量" /></BoxTd>
              <Td $align="right" $cream>{r[4]}</Td>
            </Tr>
          ))}
        </tbody>
      </Table>
      <Marks width="120" height="70" viewBox="0 0 120 70">
        <defs>
          <linearGradient id="fade">
            <stop offset="0" stopColor="#ff5566" stopOpacity=".3" />
            <stop offset=".5" stopColor="#ff5566" />
          </linearGradient>
        </defs>
        <path d="M41 10.500l71-1.500v-2l6 4-6 4v-2z" fill="url(#fade)" />
        <path d="M1 67c35-5 70-9 104-15l-1-4 12 6-9 7-1-3C72 61 36 66 1 67z" fill="url(#fade)" />
      </Marks>
    </GridBox>
  );
}

export default function App() {
  const [tab, setTab] = useState('分部分项');
  const [detail, setDetail] = useState('工料机显示');
  return (
    <Page>
      <GlobalStyle />
      <TopBar />
      <Ribbon>
        {ribbon.map(([icon, label, w, gap, sub, caret]) => (
          <RibbonItem key={icon} $w={w} $gap={gap}>
            <Icon name={icon} />
            <span>{label}</span>
            {(sub || caret) && (
              <SubLine $wide={icon === 'excel'}>{sub}{caret && <Caret w={5} />}</SubLine>
            )}
          </RibbonItem>
        ))}
      </Ribbon>
      <Main>
        <Projects />
        <Work>
          <TabStrip>
            {pageTabs.map(t => <PageTab key={t} $on={t === tab} onClick={() => setTab(t)}>{t}</PageTab>)}
            <StripTools>
              <IconButton aria-label="行高">
                <svg width="17" height="13" viewBox="0 0 17 13">
                  <path d="M3 0l3 3.500H0zM3 13l3-3.500H0zM2.500 4h1v1h-1zM2.500 6h1v1h-1zM2.500 8h1v1h-1z" fill="#888" />
                  <rect x="8" y="1" width="5" height="11" rx="1" fill="#888" />
                </svg>
              </IconButton>
              <IconButton aria-label="上移"><Arrow /></IconButton>
              <IconButton aria-label="下移"><Arrow turn={180} /></IconButton>
              <IconButton aria-label="左移"><Arrow color="#d5d5d5" turn={270} /></IconButton>
              <IconButton aria-label="右移"><Arrow color="#d5d5d5" turn={90} /></IconButton>
            </StripTools>
          </TabStrip>
          <Body>
            <Sections />
            <Grids>
              <QuotaGrid />
              <HTrack>
                <svg width="4" height="8"><path d="M4 0v8L0 4z" fill="#667" /></svg>
                <HThumb />
              </HTrack>
              <Detail>
                <DetailTabs>
                  {detailTabs.map(t => <DetailTab key={t} $on={t === detail} onClick={() => setDetail(t)}>{t}</DetailTab>)}
                </DetailTabs>
                <MaterialGrid />
              </Detail>
            </Grids>
          </Body>
        </Work>
      </Main>
    </Page>
  );
}
